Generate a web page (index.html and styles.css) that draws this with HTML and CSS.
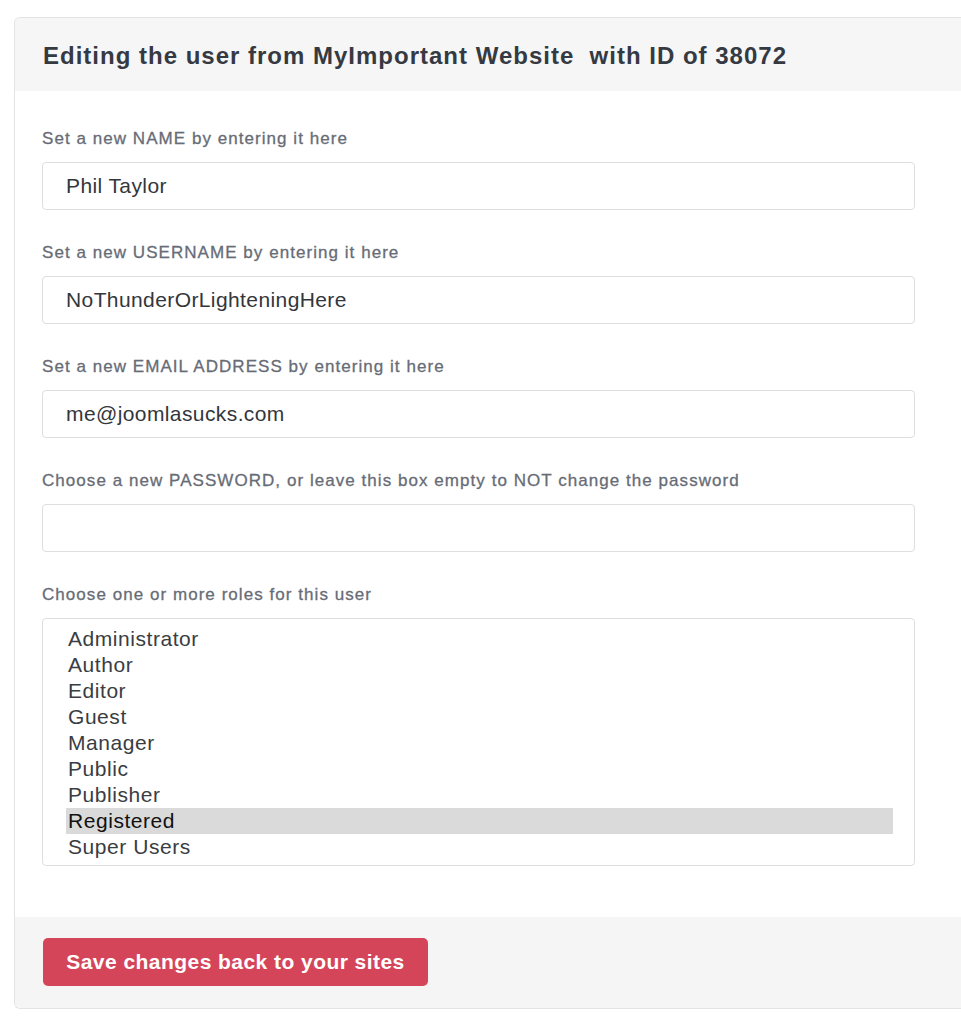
FILE: index.html
```html
<!DOCTYPE html>
<html>
<head>
<meta charset="utf-8">
<link rel="stylesheet" href="styles.css">
</head>
<body>
<div class="card">
  <div class="card-header">
    <h1 class="title">Editing the user from MyImportant Website&nbsp; with ID of 38072</h1>
  </div>
  <div class="card-body">
    <div class="field">
      <label class="label">Set a new NAME by entering it here</label>
      <div class="input">Phil Taylor</div>
    </div>
    <div class="field">
      <label class="label">Set a new USERNAME by entering it here</label>
      <div class="input">NoThunderOrLighteningHere</div>
    </div>
    <div class="field">
      <label class="label">Set a new EMAIL ADDRESS by entering it here</label>
      <div class="input">me@joomlasucks.com</div>
    </div>
    <div class="field">
      <label class="label">Choose a new PASSWORD, or leave this box empty to NOT change the password</label>
      <div class="input"></div>
    </div>
    <div class="field last">
      <label class="label">Choose one or more roles for this user</label>
      <div class="listbox">
        <div class="option">Administrator</div>
        <div class="option">Author</div>
        <div class="option">Editor</div>
        <div class="option">Guest</div>
        <div class="option">Manager</div>
        <div class="option">Public</div>
        <div class="option">Publisher</div>
        <div class="option selected">Registered</div>
        <div class="option">Super Users</div>
      </div>
    </div>
  </div>
  <div class="card-footer">
    <button class="btn">Save changes back to your sites</button>
  </div>
</div>
</body>
</html>
```

FILE: styles.css
```css
html, body {
  margin: 0;
  padding: 0;
  background: #ffffff;
  overflow: hidden;
}
body {
  padding: 17px 0 0 14px;
  font-family: "Liberation Sans", Arial, sans-serif;
}
.card {
  border: 1px solid #e3e3e5;
  border-right: none;
  border-radius: 6px 0 0 6px;
  overflow: hidden;
  background: #fff;
}
.card-header {
  background: #f6f6f7;
  height: 73px;
  display: flex;
  align-items: center;
  padding-left: 28px;
}
.title {
  margin: 0;
  font-size: 24px;
  font-weight: bold;
  color: #353a42;
  line-height: 30px;
  padding-top: 3px;
  letter-spacing: 1px;
  white-space: nowrap;
}
.card-body {
  padding: 36px 46px 51px 27px;
}
.field {
  display: flex;
  flex-direction: column;
  margin-bottom: 31px;
}
.field.last {
  margin-bottom: 0;
}
.label {
  font-size: 17px;
  line-height: 24px;
  color: #676c76;
  margin-bottom: 11px;
  letter-spacing: 1.05px;
  -webkit-text-stroke: 0.3px #676c76;
  white-space: nowrap;
}
.input {
  height: 46px;
  border: 1px solid #dcdee2;
  border-radius: 4px;
  padding-left: 23px;
  display: flex;
  align-items: center;
  font-size: 21px;
  letter-spacing: 0.4px;
  color: #33363b;
}
.listbox {
  height: 239px;
  border: 1px solid #dcdee2;
  border-radius: 4px;
  padding: 7px 21px 0 23px;
  box-sizing: content-box;
}
.option {
  height: 26px;
  line-height: 26px;
  font-size: 21px;
  letter-spacing: 0.55px;
  color: #3a3d42;
  padding-left: 2px;
}
.option.selected {
  background: #dadada;
  color: #111;
}
.card-footer {
  background: #f5f5f5;
  padding: 21px 28px 22px;
}
.btn {
  font-family: "Liberation Sans", Arial, sans-serif;
  background: #d5455a;
  color: #fff;
  border: none;
  border-radius: 5px;
  height: 48px;
  width: 385px;
  font-size: 21px;
  font-weight: bold;
  letter-spacing: 0.45px;
  padding: 0;
  display: flex;
  align-items: center;
  justify-content: center;
}
```
